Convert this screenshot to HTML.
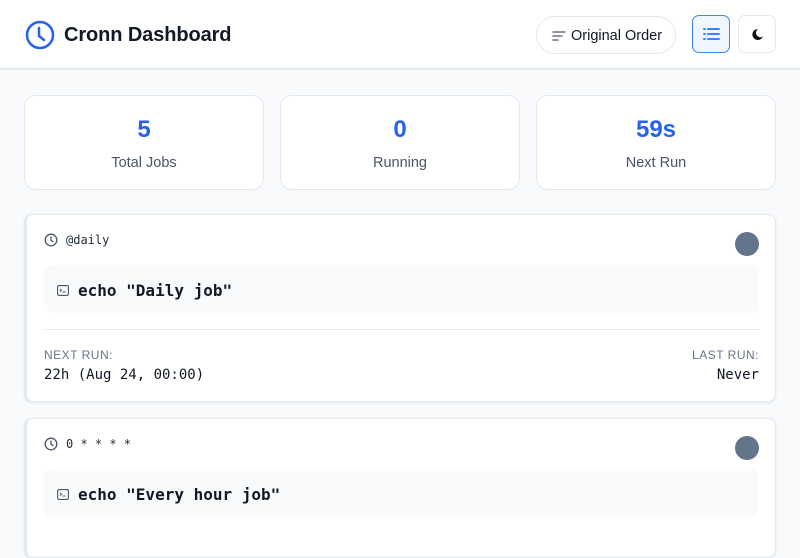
<!DOCTYPE html>
<html><head><meta charset="utf-8"><style>
*{box-sizing:border-box;margin:0;padding:0}
body{width:800px;height:513px;overflow:hidden;background:#f8fafc;font-family:"Liberation Sans",sans-serif;color:#0f172a}
.hdr{position:absolute;left:0;top:0;width:800px;height:70px;background:#fff;border-bottom:2px solid #e2e8f0}
.logo{position:absolute;left:25px;top:20px}
.title{position:absolute;left:64px;top:24px;font-size:20px;font-weight:bold;color:#111827;letter-spacing:-.1px}
.btn{position:absolute;border:1px solid #e2e8f0;background:#fff}
.stat{position:absolute;top:95px;width:240px;height:95px;background:#fff;border:1px solid #e2e8f0;border-radius:12px;text-align:center}
.stat .n{margin-top:20px;font-size:24px;font-weight:bold;color:#2563eb;line-height:28px}
.stat .l{margin-top:11px;font-size:14.5px;color:#475569}
.card{position:absolute;left:24px;width:752px;background:#fff;border:1px solid #e2e8f0;border-left:3px solid #e2e8f0;border-radius:8px;box-shadow:0 1px 3px rgba(0,0,0,.08)}
.mono{font-family:"DejaVu Sans Mono","Liberation Mono",monospace}
.sched{position:absolute;left:17px;top:18px;font-size:12px;color:#1f2937;display:flex;align-items:center;gap:8px}
.dot{position:absolute;right:16px;top:17px;width:24px;height:24px;border-radius:50%;background:#64748b}
.cmd{position:absolute;left:17px;right:16px;top:50px;height:48px;background:#f8fafc;border-radius:8px;display:flex;align-items:center;padding-left:13px;padding-top:2px;gap:9px;font-size:16px;font-weight:bold;color:#111827}
.hr{position:absolute;left:17px;right:16px;top:114px;border-top:1px solid #e2e8f0}
.lab{position:absolute;top:133px;font-size:12px;color:#64748b;letter-spacing:.5px}
.val{position:absolute;top:152px;font-size:14px;color:#111827}
</style></head><body>
<div class="hdr">
<svg class="logo" width="30" height="30" viewBox="0 0 30 30"><circle cx="15" cy="15" r="13" fill="none" stroke="#2563eb" stroke-width="2.5"/><path d="M14 8v8l5 4" fill="none" stroke="#2563eb" stroke-width="2.5" stroke-linecap="round" stroke-linejoin="round"/></svg>
<div class="title">Cronn Dashboard</div>
<div class="btn" style="left:536px;top:16px;width:140px;height:38px;border-radius:19px">
<svg style="position:absolute;left:15px;top:13px" width="14" height="12" viewBox="0 0 14 12"><path d="M1 2h12M1 6h9M1 10h5" stroke="#6b7280" stroke-width="1.6" stroke-linecap="round"/></svg>
<span style="position:absolute;left:34px;top:11px;font-size:14.5px;color:#111827">Original Order</span></div>
<div class="btn" style="left:692px;top:15px;width:38px;height:38px;border-radius:7px;border:1.5px solid #3b82f6;background:#eff6ff">
<svg style="position:absolute;left:10px;top:11px" width="17" height="14" viewBox="0 0 17 14"><path d="M1 2h1M1 7h1M1 12h1M5 2h11M5 7h11M5 12h11" stroke="#3b82f6" stroke-width="2" stroke-linecap="round"/></svg></div>
<div class="btn" style="left:738px;top:15px;width:38px;height:38px;border-radius:7px">
<svg style="position:absolute;left:12px;top:12px" width="13" height="13" viewBox="0 0 13 13"><path d="M7 1a5.5 5.5 0 1 0 5 7.5A4.5 4.5 0 0 1 7 1z" fill="#111"/></svg></div>
</div>
<div class="stat" style="left:24px"><div class="n">5</div><div class="l">Total Jobs</div></div>
<div class="stat" style="left:280px"><div class="n">0</div><div class="l">Running</div></div>
<div class="stat" style="left:536px"><div class="n">59s</div><div class="l">Next Run</div></div>

<div class="card" style="top:214px;height:188px">
<div class="sched mono"><svg width="14" height="14" viewBox="0 0 14 14"><circle cx="7" cy="7" r="5.8" fill="none" stroke="#475569" stroke-width="1.3"/><path d="M7 4v3.3l2 1.3" fill="none" stroke="#475569" stroke-width="1.3" stroke-linecap="round"/></svg>@daily</div>
<div class="dot"></div>
<div class="cmd mono"><svg width="12" height="11" viewBox="0 0 12 11"><rect x=".6" y=".6" width="10.8" height="9.8" rx="1.5" fill="none" stroke="#475569" stroke-width="1.1"/><path d="M3 4l1.5 1.3L3 6.6M5.5 7h3" fill="none" stroke="#475569" stroke-width="1"/></svg>echo "Daily job"</div>
<div class="hr"></div>
<div class="lab" style="left:17px">NEXT RUN:</div>
<div class="val mono" style="left:17px">22h (Aug 24, 00:00)</div>
<div class="lab" style="right:16px">LAST RUN:</div>
<div class="val mono" style="right:16px">Never</div>
</div>

<div class="card" style="top:418px;height:140px">
<div class="sched mono"><svg width="14" height="14" viewBox="0 0 14 14"><circle cx="7" cy="7" r="5.8" fill="none" stroke="#475569" stroke-width="1.3"/><path d="M7 4v3.3l2 1.3" fill="none" stroke="#475569" stroke-width="1.3" stroke-linecap="round"/></svg>0 * * * *</div>
<div class="dot"></div>
<div class="cmd mono"><svg width="12" height="11" viewBox="0 0 12 11"><rect x=".6" y=".6" width="10.8" height="9.8" rx="1.5" fill="none" stroke="#475569" stroke-width="1.1"/><path d="M3 4l1.5 1.3L3 6.6M5.5 7h3" fill="none" stroke="#475569" stroke-width="1"/></svg>echo "Every hour job"</div>
</div>
</body></html>
